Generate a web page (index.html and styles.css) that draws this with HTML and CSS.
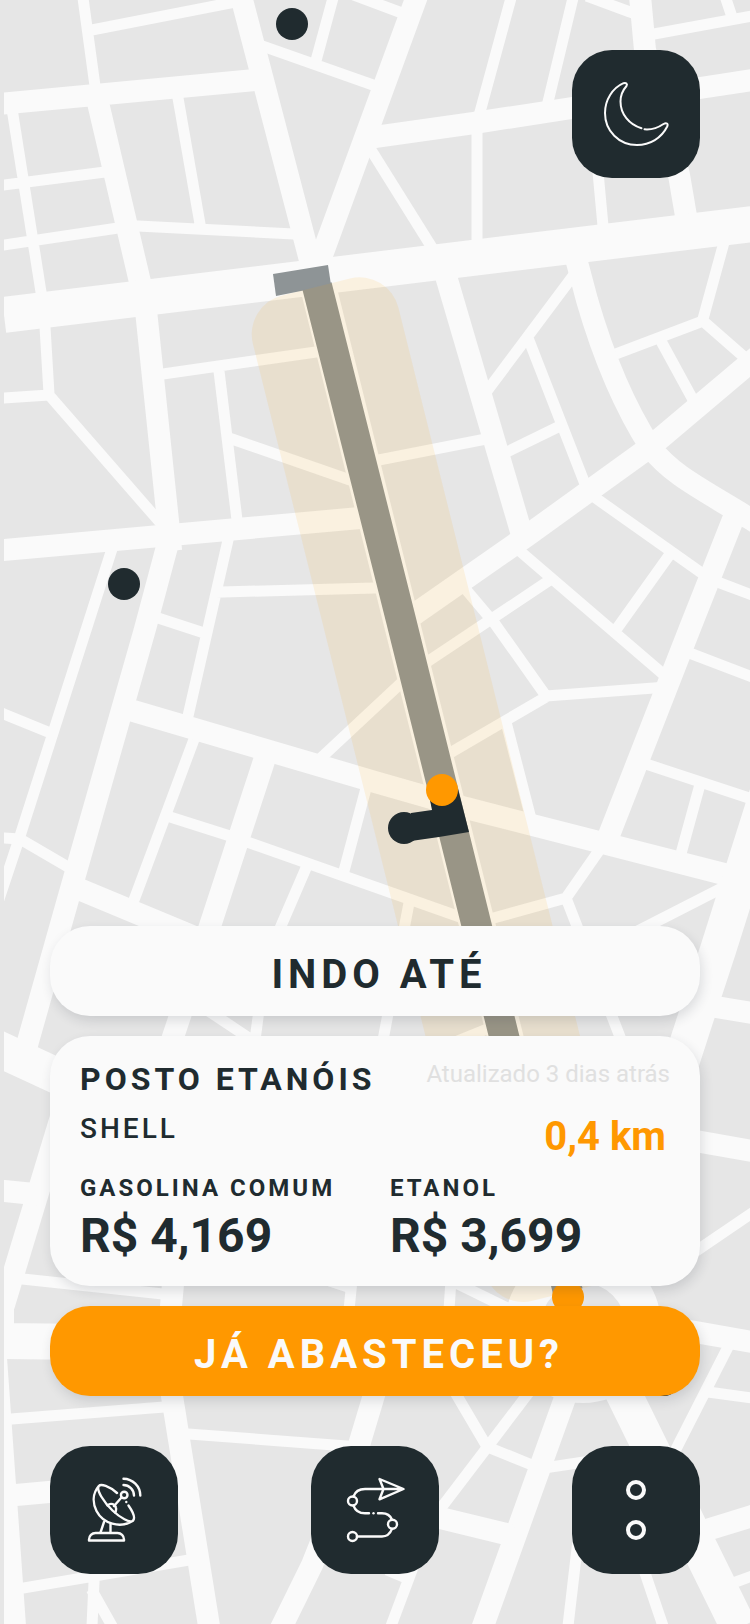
FILE: index.html
```html
<!DOCTYPE html>
<html lang="pt-BR">
<head>
<meta charset="utf-8">
<meta name="viewport" content="width=device-width, initial-scale=1">
<title>Indo até Posto Etanóis</title>
<link rel="stylesheet" href="styles.css">
</head>
<body>
<div class="screen">
  <svg class="map" viewBox="0 0 750 1624" preserveAspectRatio="xMidYMid slice" aria-hidden="true">
    <defs><clipPath id="land"><rect x="4" y="0" width="746" height="1624"/></clipPath></defs>
    <g clip-path="url(#land)">
      <g class="road road-minor">
        <path d="M83 -2L95 86M92 30L235 2M265 47L373 85M333 -2L317 57M351 -6L402 13M13 115L41 292M4 185L105 172M4 245L118 228M138 226L294 234M178 98L200 224"/>
        <path d="M511 -2L480 112M573 -2L548 102M592 -2L630 12M654 34L752 16M725 -4L731 14M371 150L431 246M477 133V242M598 172L603 226M723 246L703 319M616 354L703 321L743 356M662 343L691 396"/>
        <path d="M570 280L490 387M530 343L585 484M509 451L558 427M379 460L486 439M597 499L703 574M668 557L618 627M720 583L752 595M522 553L663 674M547 582L430 660M468 592L495 624L546 696L654 688M546 697L450 753M506 722L530 815"/>
        <path d="M652 766L752 799M699 788L682 850M692 654L752 677M598 852L566 898L490 919M566 898L622 1042M724 887L632 934M111 552L20 836L0 896M4 714L48 732M4 838L20 839L68 867"/>
        <path d="M193 742L134 900M306 868L281 926M365 792L344 871M323 756L399 685M158 618L201 632M228 540L188 716M45 327L49 394M4 398L49 395L157 519M163 374L316 352M219 371L237 520M232 439L350 480M221 592L378 588"/>
        <path d="M170 817L230 836L375 887L460 917M409 903L383 1040M455 1042L492 1027M210 1012L252 1040M259 1010L255 1040M23 1279L163 1294M330 1281L348 1287M352 1280L349 1310M11 1419L164 1407M24 1588L189 1560M94 1582L92 1626M94 1594L112 1626M188 1434L348 1446"/>
        <path d="M451 1280L449 1310M454 1282L503 1306M727 1349L674 1453M708 1392L752 1398M456 1394L486 1445M527 1395L441 1508M490 1448L532 1465M551 1467L584 1462M578 1540L568 1626M644 1570L663 1626M412 1570L391 1626M392 1572L406 1578M736 1582L752 1576M699 1249L752 1213"/>
      </g>
      <g class="road road-major">
        <path d="M4 103.500L255 80M241 -4L311 264M417 -4L318 266M99 107L140 282M640 -4L645 50L679 175L686 216M382 136L474 123L572 108L700 88L752 80M448 283L520 528"/>
        <path d="M578 266L587 300C600 345 620 400 651 448C672 475 700 488 752 520M752 361L650 447L528 535L412 616M730 527L690 628L611 830M137 712L375 782L466 808L720 873M168 543L145 629L67 903L27 1045M64 1107L7 1295"/>
        <path d="M4 1191L34 1194M263 764L210 926L172 1040M86 892L187 934M147 320L170 540M4 550L360 518M173 1284L171 1306L172 1396L209 1626M-4 1358L15 1626M16 1495L60 1491M380 1375L356 1455L312 1565L282 1626M565 1398L483 1626"/>
        <path d="M710 1529L752 1516M690 1331L752 1342M440 1518L502 1533M716 1007L752 1013M696 1141L752 1151"/>
      </g>
      <g class="road road-main">
        <path d="M4 315L752 224M312 262L401 620L505 1036L566 1280M767 795L718 950L695 1020L640 1190M-16 1042L70 1082M4 1341L90 1342M618 1382L708 1565L739 1628M-4 1290V1340"/>
        <circle cx="583" cy="1325" r="60"/>
      </g>
    </g>
    <path class="route-fill" d="M273 274L328 265L331 285L276 296Z"/>
    <path class="route-line" d="M317 286L401 620L504 1036L568 1292"/>
    <rect class="route-halo" x="-75" y="0" width="150" height="1036" rx="40" transform="translate(316 287) rotate(-14)"/>
    <g class="dark-fill">
      <circle cx="292" cy="24" r="16"/>
      <circle cx="124" cy="584" r="16"/>
      <circle cx="404" cy="828" r="16"/>
      <circle cx="664" cy="1380" r="16"/>
      <path d="M411 813L432 810L429 795L458 789L469 832L439 837L411 841Z"/>
    </g>
    <circle class="accent-fill" cx="442" cy="790" r="16"/>
    <circle class="accent-fill" cx="568" cy="1297" r="16"/>
  </svg>

  <header class="top-bar">
    <button class="tile" type="button" aria-label="Modo noturno">
      <svg class="icon" viewBox="0 0 128 128">
        <path d="M69.500 78.300C57 74.500 48.500 64 48.500 51.500C48.500 45.500 51 40 54.500 36C55.800 34 54 32.200 51.500 33.200C40.500 38 33 50 33 63C33 81 47 95 65 95C78 95 89.500 88 95.200 76.500C96.500 73.500 94.500 72.300 91.500 74C86 77.700 80 80 72.500 79.300"/>
      </svg>
    </button>
  </header>

  <main class="panel">
    <h1 class="pill">INDO ATÉ</h1>
    <section class="card">
      <div class="card-head">
        <div class="station">
          <h2 class="station-name">POSTO ETANÓIS</h2>
          <p class="station-brand">SHELL</p>
        </div>
        <div class="status">
          <p class="updated">Atualizado 3 dias atrás</p>
          <p class="distance">0,4 km</p>
        </div>
      </div>
      <dl class="prices">
        <div class="price">
          <dt class="fuel">GASOLINA COMUM</dt>
          <dd class="amount">R$ 4,169</dd>
        </div>
        <div class="price">
          <dt class="fuel">ETANOL</dt>
          <dd class="amount">R$ 3,699</dd>
        </div>
      </dl>
    </section>
    <button class="pill pill-accent" type="button">JÁ ABASTECEU?</button>
    <nav class="dock">
      <button class="tile" type="button" aria-label="Radar">
        <svg class="icon icon-medium" viewBox="0 0 128 128">
          <path d="M67 47C59 40 51 37.500 48.800 40C46 44 54 56.500 62.500 64.500C70 71.500 80 77.500 83 74.500C85.500 72 83 66 78.500 59.500M48.800 40C42.500 47.500 42.500 57 46.500 65C53 77.500 70 83 83 74.700"/>
          <path d="M57.500 59.500C60.500 56.500 65.500 58 66 62C66.300 64 66 65.500 65 66.500M64 60L71.500 51.500M54 76L50.500 86.500M60.500 78V86.500"/>
          <circle cx="74.200" cy="49" r="3.300"/>
          <path d="M73.500 39A10.500 10.500 0 0 1 84 49.500M73.500 32.700A17 17 0 0 1 90.300 49.500"/>
          <path d="M39 94.500V93.500A6.500 6.500 0 0 1 45.500 87H67.500A6.500 6.500 0 0 1 74 93.500V94.500Z"/>
          <circle class="icon-dot" cx="76.300" cy="56" r="1.200"/>
        </svg>
      </button>
      <button class="tile" type="button" aria-label="Rotas">
        <svg class="icon icon-medium" viewBox="0 0 128 128">
          <circle cx="41.500" cy="55" r="4.500"/>
          <circle cx="81.500" cy="78.300" r="4.500"/>
          <circle cx="41.500" cy="90.500" r="4.500"/>
          <path d="M68.500 33L92.500 43L68.500 53.300L72.500 43ZM90 43H54C48 43 44 46 42.500 50.500M42.500 59.600C44 64 48 67.300 54 67.300H58M67 67.300H71C76 67.300 79.500 70 81 73.700M81 82.900C79 88 75.500 90.500 71 90.500H46"/>
          <circle class="icon-dot" cx="62.500" cy="67.300" r="1.200"/>
        </svg>
      </button>
      <button class="tile" type="button" aria-label="Mais opções">
        <svg class="icon icon-bold" viewBox="0 0 128 128">
          <circle cx="64" cy="44" r="8"/>
          <circle cx="64" cy="84" r="8"/>
        </svg>
      </button>
    </nav>
  </main>
</div>
</body>
</html>
```

FILE: styles.css
```css
:root {
  --dark: #202b2f;
  --light: #fafafa;
  --accent: #ff9800;
  --land: #e6e6e6;
}

* {
  box-sizing: border-box;
  margin: 0;
  padding: 0;
}

body {
  background: var(--land);
  color: var(--dark);
  font-family: Roboto, "Liberation Sans", sans-serif;
}

button {
  border: 0;
  font: inherit;
  cursor: pointer;
}

.screen {
  position: relative;
  display: flex;
  flex-direction: column;
  justify-content: space-between;
  gap: 20px;
  min-height: 100vh;
  padding: 50px;
}

/* The map fills the screen behind the controls */
.map {
  position: absolute;
  inset: 0;
  width: 100%;
  height: 100%;
}

.road {
  fill: none;
  stroke: var(--light);
  stroke-linejoin: round;
}

.road-minor {
  stroke-width: 11px;
  stroke-linecap: square;
}

.road-major {
  stroke-width: 22px;
  stroke-linecap: square;
}

.road-main { stroke-width: 36px; }

.route-fill { fill: #8e9496; }

.route-line {
  fill: none;
  stroke: #8e9496;
  stroke-width: 30px;
}

.route-halo {
  fill: #ffa500;
  opacity: 0.1;
}

.dark-fill { fill: var(--dark); }
.accent-fill { fill: var(--accent); }

.top-bar {
  position: relative;
  display: flex;
  justify-content: flex-end;
}

.panel {
  position: relative;
  display: flex;
  flex-direction: column;
  gap: 20px;
}

.tile {
  width: 128px;
  height: 128px;
  border-radius: 40px;
  background: var(--dark);
}

.icon {
  display: block;
  width: 100%;
  fill: none;
  stroke: var(--light);
  stroke-width: 2;
  stroke-linecap: round;
  stroke-linejoin: round;
}

.icon-medium { stroke-width: 2.4; }
.icon-bold { stroke-width: 4; }

.icon-dot {
  fill: var(--light);
  stroke: none;
}

.pill {
  display: flex;
  align-items: center;
  justify-content: center;
  width: 100%;
  min-height: 90px;
  padding: 8px 0 0 8px;
  border-radius: 40px;
  background: var(--light);
  box-shadow: 2px 5px 12px rgba(32, 43, 60, 0.14);
  font-size: 40px;
  font-weight: 700;
  line-height: 48px;
  letter-spacing: 5px;
}

.pill-accent {
  background: var(--accent);
  color: var(--light);
}

.card {
  display: flex;
  flex-direction: column;
  gap: 14px;
  padding: 24px 30px 22px;
  border-radius: 40px;
  background: var(--light);
  box-shadow: 2px 5px 12px rgba(32, 43, 60, 0.14);
}

.card-head {
  display: flex;
  justify-content: space-between;
}

.station {
  display: flex;
  flex-direction: column;
  gap: 15px;
}

.station-name {
  font-size: 32px;
  font-weight: 700;
  line-height: 38px;
  letter-spacing: 4px;
}

.station-brand {
  font-size: 28px;
  font-weight: 500;
  line-height: 32px;
  letter-spacing: 3px;
}

.status {
  display: flex;
  flex-direction: column;
  gap: 26px;
  text-align: right;
}

.updated {
  color: #e0e0e0;
  font-size: 24px;
  line-height: 28px;
}

.distance {
  padding-right: 4px;
  color: var(--accent);
  font-size: 40px;
  font-weight: 700;
  line-height: 46px;
}

.prices {
  display: grid;
  grid-template-columns: 1fr 1fr;
  gap: 30px;
}

.price {
  display: flex;
  flex-direction: column;
  gap: 6px;
}

.fuel {
  font-size: 24px;
  font-weight: 700;
  line-height: 28px;
  letter-spacing: 3px;
}

.amount {
  font-size: 48px;
  font-weight: 700;
  line-height: 56px;
}

.dock {
  display: flex;
  justify-content: space-between;
  padding-top: 30px;
}
```
